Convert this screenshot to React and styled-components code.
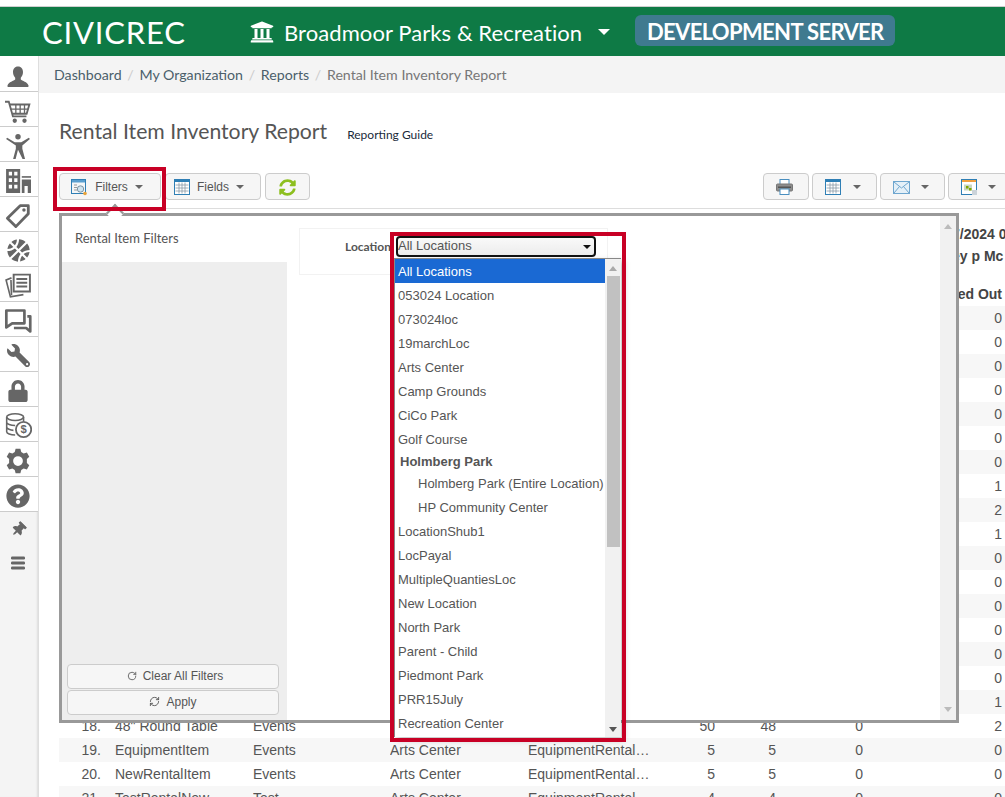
import React from "react";
import styled, { createGlobalStyle } from "styled-components";
import {
  FaUniversity,
  FaBasketballBall,
  FaWrench,
  FaLock,
  FaQuestionCircle,
  FaThumbtack,
  FaSyncAlt,
} from "react-icons/fa";
import { RotateCw, RefreshCw } from "lucide-react";

const GlobalStyle = createGlobalStyle`
  html, body {
    margin: 0;
    padding: 0;
    background: #fff;
  }
  * {
    box-sizing: border-box;
  }
`;

const Page = styled.div`
  position: relative;
  width: 1005px;
  height: 797px;
  padding-top: 6px;
  overflow: hidden;
  background: #fff;
  font-family: "Liberation Sans", Arial, sans-serif;
  color: #555;
`;

const Header = styled.header`
  display: flex;
  align-items: center;
  height: 50px;
  padding-left: 42px;
  background: #0e7a45;
  border-top: 1px solid #cfcfcf;
  color: #fff;
  font-family: Lato, sans-serif;
`;

const Logo = styled.div`
  width: 208px;
  font-size: 31px;
  font-weight: 400;
  letter-spacing: 0.8px;
`;

const OrgName = styled.div`
  display: flex;
  align-items: center;
  gap: 10px;
  padding-top: 1px;
  font-size: 22px;
  letter-spacing: 0.08px;
  svg {
    font-size: 24px;
  }
`;

const OrgCaret = styled.span`
  width: 0;
  height: 0;
  margin: 0 25px 0 16px;
  border-left: 6px solid transparent;
  border-right: 6px solid transparent;
  border-top: 6px solid #fff;
`;

const ServerBadge = styled.div`
  flex: none;
  width: 260px;
  height: 31px;
  margin-top: -2px;
  border-radius: 6px;
  background: #3f7a8f;
  font-size: 22px;
  font-weight: 700;
  line-height: 33px;
  text-align: center;
  white-space: nowrap;
  letter-spacing: -0.65px;
`;

const Body = styled.div`
  display: flex;
  height: 741px;
`;

const Sidebar = styled.nav`
  flex: 0 0 39px;
  background: #f4f4f4;
  box-shadow: inset -3px 0 2px -1px #ddd;
`;

const SideItem = styled.div`
  display: flex;
  align-items: center;
  justify-content: center;
  width: 38px;
  height: ${({ $tall }) => ($tall ? 36 : 35)}px;
  padding: ${({ $plain, $tall }) => ($plain ? 0 : $tall ? 6 : 3)}px 2px 0 0;
  color: #666;
  background: ${({ $plain }) => ($plain ? "transparent" : "#fff")};
  border-bottom: ${({ $plain }) => ($plain ? "none" : "1px solid #ccc")};
`;

const Main = styled.main`
  flex: 1;
  min-width: 0;
`;

const Breadcrumb = styled.div`
  display: flex;
  align-items: center;
  height: 37px;
  padding-left: 15px;
  background: #f4f4f4;
  font-family: Lato, sans-serif;
  font-size: 14.2px;
  color: #4b5f6b;
`;

const Crumb = styled.span`
  color: ${({ $active }) => ($active ? "#777" : "#4b5f6b")};
`;

const CrumbSep = styled.span`
  padding: 0 5.7px;
  color: #ccc;
`;

const Content = styled.div`
  padding-left: 20px;
`;

const TitleRow = styled.div`
  display: flex;
  align-items: baseline;
  gap: 20px;
  height: 80px;
  padding-top: 25px;
  font-family: Lato, sans-serif;
`;

const Title = styled.h1`
  margin: 0;
  font-size: 21.2px;
  font-weight: 400;
  color: #555;
`;

const GuideLink = styled.a`
  font-size: 12px;
  color: #1a2a3a;
`;

const Toolbar = styled.div`
  display: flex;
  justify-content: space-between;
  height: 36px;
  border-bottom: 1px solid #ddd;
`;

const ToolGroup = styled.div`
  display: flex;
  gap: ${({ $gap }) => $gap}px;
  margin-right: ${({ $shift }) => $shift || 0}px;
`;

const ToolButton = styled.button`
  display: flex;
  align-items: center;
  justify-content: center;
  gap: ${({ $gap }) => $gap || 7}px;
  flex: none;
  width: ${({ $w }) => $w}px;
  height: 27px;
  padding: 1px ${({ $pad }) => $pad || 0}px 0 0;
  background: #f6f6f6;
  border: 1px solid #ccc;
  border-radius: 4px;
  font-family: "Liberation Sans", Arial, sans-serif;
  font-size: 12px;
  color: #555;
`;

const Caret = styled.span`
  width: 0;
  height: 0;
  border-left: 4px solid transparent;
  border-right: 4px solid transparent;
  border-top: 4px solid #666;
`;

const ReportMeta = styled.div`
  height: 73px;
  padding: 14px 0 0 893px;
  font-size: 14px;
  font-weight: 700;
  line-height: 22px;
  white-space: nowrap;
  color: #444;
`;

const Grid = "42px 152px 137px 138px 122px 65px 61px 87px 139px";

const TableHead = styled.div`
  display: grid;
  grid-template-columns: ${Grid};
  height: 24px;
  align-items: center;
  font-size: 14px;
  font-weight: 700;
  color: #444;
`;

const HeadLast = styled.div`
  grid-column: 9;
  text-align: right;
  white-space: nowrap;
`;

const Row = styled.div`
  display: grid;
  grid-template-columns: ${Grid};
  align-items: center;
  height: 24px;
  font-size: 14px;
  background: ${({ $odd }) => ($odd ? "#f7f7f7" : "#fff")};
`;

const Cell = styled.div`
  min-width: 0;
  padding-left: ${({ $inset }) => $inset || 0}px;
  text-align: ${({ $num }) => ($num ? "right" : "left")};
  white-space: nowrap;
  overflow: hidden;
  text-overflow: ellipsis;
`;

const FilterPanel = styled.section`
  position: absolute;
  left: 59px;
  top: 213px;
  z-index: 2;
  display: flex;
  width: 900px;
  height: 510px;
  background: #fff;
  border: 3px solid #999;
`;

const PanelNotch = styled.span`
  position: absolute;
  left: 44px;
  top: -12px;
  width: 18px;
  height: 18px;
  background: #fff;
  border-top: 3px solid #999;
  border-left: 3px solid #999;
  transform: rotate(45deg) scale(0.72);
`;

const FilterSide = styled.aside`
  display: flex;
  flex-direction: column;
  flex: 0 0 225px;
`;

const SideTitle = styled.div`
  height: 46px;
  padding: 14px 0 0 13px;
  font-family: Lato, sans-serif;
  font-size: 13px;
  color: #555;
`;

const SideBody = styled.div`
  display: flex;
  flex: 1;
  flex-direction: column;
  justify-content: flex-end;
  gap: 1px;
  padding: 0 8px 5px 5px;
  background: #eee;
`;

const SideButton = styled.button`
  display: flex;
  align-items: center;
  justify-content: center;
  gap: 6px;
  height: 25px;
  padding: 0 0 2px ${({ $inset }) => $inset || 0}px;
  background: #f6f6f6;
  border: 1px solid #ccc;
  border-radius: 4px;
  font-family: "Liberation Sans", Arial, sans-serif;
  font-size: 12px;
  color: #555;
`;

const FilterBody = styled.div`
  flex: 1;
  padding: 12px 0 0 12px;
`;

const FilterBox = styled.div`
  display: flex;
  width: 309px;
  height: 47px;
  padding: 7px 0 0 45px;
  border: 1px solid #f2f2f2;
`;

const FilterLabel = styled.label`
  width: 52px;
  font-family: Lato, sans-serif;
  font-size: 12px;
  font-weight: 700;
  line-height: 22px;
  color: #555;
`;

const SelectWrap = styled.div`
  position: relative;
  width: 200px;
  height: 22px;
  margin-left: -1px;
`;

const SelectBox = styled.div`
  display: flex;
  align-items: center;
  justify-content: space-between;
  height: 21px;
  padding: 0 3px 2px 0;
  background: linear-gradient(#f9f9f9, #ececec);
  border: 2px solid #111;
  border-radius: 4px;
  font-size: 13px;
  color: #555;
`;

const SelectArrow = styled.span`
  width: 0;
  height: 0;
  margin-top: 2px;
  border-left: 4px solid transparent;
  border-right: 4px solid transparent;
  border-top: 4px solid #111;
`;

const ListBox = styled.div`
  position: absolute;
  left: -2px;
  top: 22px;
  z-index: 3;
  display: flex;
  width: 227px;
  height: 479px;
  overflow: hidden;
  background: #fff;
  border-top: 1px solid #888;
  border-left: 1px solid #888;
  box-shadow: 3px 3px 6px rgba(0, 0, 0, 0.25);
`;

const Options = styled.ul`
  flex: 1;
  min-width: 0;
  margin: 0;
  padding: 0;
  list-style: none;
  font-size: 13px;
  color: #555;
`;

const Option = styled.li`
  height: 24px;
  padding-left: ${({ $child }) => ($child ? 23 : 3)}px;
  line-height: 26px;
  white-space: nowrap;
  background: ${({ $selected }) => ($selected ? "#1a69d3" : "transparent")};
  color: ${({ $selected }) => ($selected ? "#fff" : "inherit")};
`;

const OptionGroup = styled.li`
  height: 20px;
  padding-left: 5px;
  font-weight: 700;
  line-height: 22px;
`;

const ScrollTrack = styled.div`
  display: flex;
  flex-direction: column;
  align-items: center;
  justify-content: ${({ $plain }) => ($plain ? "space-between" : "flex-start")};
  flex: 0 0 16px;
  padding: ${({ $plain }) => ($plain ? "8px 0 8px" : "0")};
  background: #f1f1f1;
`;

const ScrollArrow = styled.span`
  display: block;
  width: 0;
  height: 0;
  border-left: 4px solid transparent;
  border-right: 4px solid transparent;
  border-${({ $down }) => ($down ? "top" : "bottom")}: 5px solid ${({ $color }) => $color};
`;

const ListTrack = styled(ScrollTrack)`
  position: relative;
  padding-top: 7px;
`;

const ScrollThumb = styled.div`
  width: 13px;
  height: 271px;
  margin-top: 5px;
  background: #c1c1c1;
`;

const ListDown = styled.span`
  position: absolute;
  bottom: 5px;
`;

const Callout = styled.div`
  position: absolute;
  left: ${({ $x }) => $x}px;
  top: ${({ $y }) => $y}px;
  z-index: 4;
  width: ${({ $w }) => $w}px;
  height: ${({ $h }) => $h}px;
  border: 4px solid #c80025;
  pointer-events: none;
`;

// sidebar drawings, all on a 24 box
const Glyph = ({ size = 24, children }) => (
  <svg width={size} height={size} viewBox="0 0 24 24" fill="currentColor">
    {children}
  </svg>
);

const UserGlyph = () => (
  <Glyph>
    <path d="M12 1.500c-3.400 0-5 2.600-5 5.600 0 2.300.9 4.400 2.200 5.600v1.800C8 16 2.500 16.800 1.500 20.500c-.2.9 0 1.500 1 1.500h19c1 0 1.200-.6 1-1.500C21.500 16.800 16 16 14.800 14.500v-1.800C16.100 11.500 17 9.400 17 7.100c0-3-1.600-5.600-5-5.600z" />
  </Glyph>
);

const CartGlyph = () => (
  <Glyph size={26}>
    <g fill="none" stroke="currentColor" strokeWidth="1.700">
      <path d="M0 3.500h3.500l3.800 13.500h12.500" />
      <path d="M4.500 6h18l-2.500 8.500H7" />
      <path d="M10 6v8.500M14 6v8.500M18 6v8.500M5.500 10.200h16" strokeWidth="1.200" />
    </g>
    <circle cx="9" cy="21" r="2" />
    <circle cx="18" cy="21" r="2" />
  </Glyph>
);

const PersonGlyph = () => (
  <Glyph size={26}>
    <circle cx="12" cy="3.500" r="2.500" />
    <path d="M1 5.500l1-1.200 7 4.200h6l7-4.200 1 1.200-7 6v3l2.500 9.500h-2.300L12 15.500 9.800 24H7.500L10 14.500v-3z" />
  </Glyph>
);

const BuildingGlyph = () => (
  <Glyph size={26}>
    <path
      fillRule="evenodd"
      d="M1 1h13v22H1zM3.500 3.500v3.500h3V3.500zM8.500 3.500v3.500h3V3.500zM3.500 9.500v3.500h3V9.500zM8.500 9.500v3.500h3V9.500zM3.500 15.500v3.500h3v-3.500zM8.500 15.500v3.500h3v-3.500z"
    />
    <path d="M15.500 7.500H24v1.500h-8.500z" />
    <path fillRule="evenodd" d="M15.500 10.500H24V23h-3v-6.500h-3V23h-2.500z" />
  </Glyph>
);

const TagGlyph = () => (
  <Glyph size={26}>
    <path
      fill="none"
      stroke="currentColor"
      strokeWidth="2.600"
      strokeLinejoin="round"
      d="M14 2.500h7.500v7.500L10 21.800 2.200 14z"
    />
    <circle cx="17.500" cy="6.500" r="1.600" />
  </Glyph>
);

const PapersGlyph = () => (
  <Glyph size={26}>
    <g fill="none" stroke="currentColor" strokeWidth="1.500">
      <path d="M8 1.500h15v15.500H8z" strokeWidth="1.800" />
      <path d="M10.500 5.500h10M10.500 9h10M10.500 12.500h10" strokeWidth="1.800" />
      <path d="M6 4.500L1 6.500l4 15.500 12-2" />
      <path d="M5.500 6.500l.5 14" />
    </g>
  </Glyph>
);

const ChatGlyph = () => (
  <Glyph size={28}>
    <g fill="none" stroke="currentColor" strokeWidth="2.300" strokeLinejoin="round">
      <path d="M2 3h15.500v11H7l-5 3.500z" />
      <path d="M20 8h2.500v13l-3.500-3H8.500" />
    </g>
  </Glyph>
);

const CoinsGlyph = () => (
  <Glyph size={27}>
    <g fill="none" stroke="currentColor" strokeWidth="1.400">
      <ellipse cx="9" cy="4.500" rx="7.500" ry="3" />
      <path d="M1.500 4.500v13c0 1.600 3.400 3 7.500 3M1.500 9c0 1.600 3.400 3 7.500 3M1.500 13.300c0 1.600 3.400 3 6 3M16.500 4.500v4" />
      <circle cx="16.500" cy="15.500" r="6.800" strokeWidth="1.600" />
    </g>
    <text x="16.500" y="19" fontSize="10" fontWeight="700" textAnchor="middle" fontFamily="Liberation Sans">
      $
    </text>
  </Glyph>
);

const CogGlyph = () => (
  <Glyph size={26}>
    <path
      fillRule="evenodd"
      d="M9.800 0.800h4.400l.8 3 2.200 1.200 3-.8 2.200 3.800-2.200 2.200v3.600l2.200 2.200-2.200 3.800-3-.8-2.200 1.200-.8 3H9.800l-.8-3-2.200-1.200-3 .8-2.200-3.800 2.200-2.200v-3.600L1.600 8 3.800 4.200l3 .8L9 3.800zM12 7.500a4.500 4.500 0 1 0 0 9 4.500 4.500 0 0 0 0-9z"
    />
  </Glyph>
);

const BarsGlyph = () => (
  <svg width="14" height="14" viewBox="0 0 14 14" fill="currentColor" style={{ marginTop: -3 }}>
    <rect y="0.500" width="14" height="3" rx="1.200" />
    <rect y="5.500" width="14" height="3" rx="1.200" />
    <rect y="10.500" width="14" height="3" rx="1.200" />
  </svg>
);

// toolbar drawings
const FilterGlyph = () => (
  <svg width="17" height="17" viewBox="0 0 17 17">
    <rect x="0.500" y="0.500" width="14" height="14" fill="#f3f6f8" stroke="#2f7fb5" />
    <rect x="1" y="1" width="13" height="2.500" fill="#5a9fd0" />
    <circle cx="9.500" cy="10" r="3.200" fill="#cfe3ee" stroke="#7d95a5" />
    <circle cx="14" cy="14.500" r="1.800" fill="#e8a33a" />
    <path d="M3 6h3M3 8.500h3M3 11h3" stroke="#999" />
  </svg>
);

const TableGlyph = ({ top = "#2f7fb5" }) => (
  <svg width="16" height="16" viewBox="0 0 16 16">
    <rect x="0.500" y="0.500" width="15" height="15" fill="#fff" stroke="#2f7fb5" />
    <rect x="1" y="1" width="14" height="2" fill={top} />
    <path d="M1.500 6h13M1.500 9h13M1.500 12h13M5 3.500v11M8 3.500v11M11 3.500v11" stroke="#8a9aa6" strokeWidth="0.800" />
  </svg>
);

const PrintGlyph = () => (
  <svg width="17" height="16" viewBox="0 0 17 16">
    <rect x="4" y="0.500" width="9" height="5" fill="#fff" stroke="#4a8fc0" />
    <rect x="0.500" y="5" width="16" height="7" rx="1" fill="#8d8d8d" stroke="#777" />
    <rect x="2" y="7.500" width="13" height="1.500" fill="#555" />
    <rect x="4" y="10" width="9" height="5.500" fill="#fff" stroke="#4a8fc0" />
  </svg>
);

const MailGlyph = () => (
  <svg width="17" height="13" viewBox="0 0 17 13">
    <rect x="0.500" y="0.500" width="16" height="12" fill="#e4f0f8" stroke="#6ea6cf" />
    <path d="M1 1l7.500 6L16 1M1 12l5.500-6.500M16 12l-5.500-6.500" fill="none" stroke="#6ea6cf" />
  </svg>
);

const CalendarGlyph = () => (
  <svg width="16" height="16" viewBox="0 0 16 16">
    <rect x="0.500" y="0.500" width="15" height="15" fill="#fff" stroke="#2f7fb5" />
    <rect x="1" y="1" width="14" height="2" fill="#f0a040" />
    <path d="M3 5.500h8v6H3z" fill="#c9d6c0" />
    <rect x="5" y="7" width="2.500" height="2.500" fill="#7fa800" />
    <rect x="8" y="9" width="2.500" height="2.500" fill="#7fa800" />
    <rect x="11" y="11" width="5" height="5" fill="#cbd3d9" />
  </svg>
);

const sideItems = [
  <UserGlyph />,
  <CartGlyph />,
  <PersonGlyph />,
  <BuildingGlyph />,
  <TagGlyph />,
  <FaBasketballBall size={23} />,
  <PapersGlyph />,
  <ChatGlyph />,
  <FaWrench size={23} style={{ transform: "scaleX(-1)" }} />,
  <FaLock size={22} />,
  <CoinsGlyph />,
  <CogGlyph />,
  <FaQuestionCircle size={24} />,
];

const locations = [
  { name: "053024 Location" },
  { name: "073024loc" },
  { name: "19marchLoc" },
  { name: "Arts Center" },
  { name: "Camp Grounds" },
  { name: "CiCo Park" },
  { name: "Golf Course" },
  { name: "Holmberg Park", group: true },
  { name: "Holmberg Park (Entire Location)", child: true },
  { name: "HP Community Center", child: true },
  { name: "LocationShub1" },
  { name: "LocPayal" },
  { name: "MultipleQuantiesLoc" },
  { name: "New Location" },
  { name: "North Park" },
  { name: "Parent - Child" },
  { name: "Piedmont Park" },
  { name: "PRR15July" },
  { name: "Recreation Center" },
];

// rows 1-17 sit behind the open filter panel, only the last column shows
const checkedOut = [0, 0, 0, 0, 0, 0, 0, 1, 2, 1, 0, 0, 0, 0, 0, 0, 1];

const lastRows = [
  { n: 18, name: '48" Round Table', cat: "Events", a: 50, b: 48, c: 0, d: 2 },
  { n: 19, name: "EquipmentItem", cat: "Events", loc: "Arts Center", type: "EquipmentRental Item", a: 5, b: 5, c: 0, d: 0 },
  { n: 20, name: "NewRentalItem", cat: "Events", loc: "Arts Center", type: "EquipmentRental Item", a: 5, b: 5, c: 0, d: 0 },
  { n: 21, name: "TestRentalNew", cat: "Test", loc: "Arts Center", type: "EquipmentRental Item", a: 4, b: 4, c: 0, d: 0 },
];

const rows = [
  ...checkedOut.map((d, i) => ({ n: i + 1, d })),
  ...lastRows,
];

function App() {
  return (
    <Page>
      <GlobalStyle />
      <Header>
        <Logo>CIVICREC</Logo>
        <OrgName>
          <FaUniversity />
          Broadmoor Parks &amp; Recreation
        </OrgName>
        <OrgCaret />
        <ServerBadge>DEVELOPMENT SERVER</ServerBadge>
      </Header>
      <Body>
        <Sidebar>
          {sideItems.map((icon, i) => (
            <SideItem key={i} $tall={i === 0}>
              {icon}
            </SideItem>
          ))}
          <SideItem $plain>
            <FaThumbtack size={15} style={{ transform: "rotate(45deg)" }} />
          </SideItem>
          <SideItem $plain>
            <BarsGlyph />
          </SideItem>
        </Sidebar>
        <Main>
          <Breadcrumb>
            <Crumb>Dashboard</Crumb>
            <CrumbSep>/</CrumbSep>
            <Crumb>My Organization</Crumb>
            <CrumbSep>/</CrumbSep>
            <Crumb>Reports</Crumb>
            <CrumbSep>/</CrumbSep>
            <Crumb $active>Rental Item Inventory Report</Crumb>
          </Breadcrumb>
          <Content>
            <TitleRow>
              <Title>Rental Item Inventory Report</Title>
              <GuideLink>Reporting Guide</GuideLink>
            </TitleRow>
            <Toolbar>
              <ToolGroup $gap={4}>
                <ToolButton $w={102} $pad={6}>
                  <FilterGlyph />
                  Filters
                  <Caret />
                </ToolButton>
                <ToolButton $w={96} $pad={8}>
                  <TableGlyph />
                  Fields
                  <Caret />
                </ToolButton>
                <ToolButton $w={45}>
                  <FaSyncAlt size={17} color="#8dbf1f" />
                </ToolButton>
              </ToolGroup>
              <ToolGroup $gap={3} $shift={-3}>
                <ToolButton $w={46} $pad={3}>
                  <PrintGlyph />
                </ToolButton>
                <ToolButton $w={65} $gap={12} $pad={4}>
                  <TableGlyph />
                  <Caret />
                </ToolButton>
                <ToolButton $w={65} $gap={11} $pad={4}>
                  <MailGlyph />
                  <Caret />
                </ToolButton>
                <ToolButton $w={60} $gap={11}>
                  <CalendarGlyph />
                  <Caret />
                </ToolButton>
              </ToolGroup>
            </Toolbar>
            <ReportMeta>
              <div>7/2024 0</div>
              <div>ey p Mc</div>
            </ReportMeta>
            <TableHead>
              <HeadLast>Checked Out</HeadLast>
            </TableHead>
            {rows.map((r) => (
              <Row key={r.n} $odd={r.n % 2 === 1}>
                <Cell $num>{r.n}.</Cell>
                <Cell $inset={14}>{r.name}</Cell>
                <Cell>{r.cat}</Cell>
                <Cell>{r.loc}</Cell>
                <Cell>{r.type}</Cell>
                <Cell $num>{r.a}</Cell>
                <Cell $num>{r.b}</Cell>
                <Cell $num>{r.c}</Cell>
                <Cell $num>{r.d}</Cell>
              </Row>
            ))}
          </Content>
        </Main>
      </Body>

      <FilterPanel>
        <PanelNotch />
        <FilterSide>
          <SideTitle>Rental Item Filters</SideTitle>
          <SideBody>
            <SideButton $inset={4}>
              <RotateCw size={10} />
              Clear All Filters
            </SideButton>
            <SideButton>
              <RefreshCw size={11} />
              Apply
            </SideButton>
          </SideBody>
        </FilterSide>
        <FilterBody>
          <FilterBox>
            <FilterLabel>Location</FilterLabel>
            <SelectWrap>
              <SelectBox>
                All Locations
                <SelectArrow />
              </SelectBox>
              <ListBox>
                <Options>
                  <Option $selected>All Locations</Option>
                  {locations.map((loc) =>
                    loc.group ? (
                      <OptionGroup key={loc.name}>{loc.name}</OptionGroup>
                    ) : (
                      <Option key={loc.name} $child={loc.child}>
                        {loc.name}
                      </Option>
                    )
                  )}
                </Options>
                <ListTrack>
                  <ScrollArrow $color="#aaa" />
                  <ScrollThumb />
                  <ListDown>
                    <ScrollArrow $down $color="#555" />
                  </ListDown>
                </ListTrack>
              </ListBox>
            </SelectWrap>
          </FilterBox>
        </FilterBody>
        <ScrollTrack $plain>
          <ScrollArrow $color="#bbb" />
          <ScrollArrow $down $color="#bbb" />
        </ScrollTrack>
      </FilterPanel>

      <Callout $x={53} $y={167} $w={113} $h={44} />
      <Callout $x={390} $y={232} $w={236} $h={510} />
    </Page>
  );
}

export default App;
